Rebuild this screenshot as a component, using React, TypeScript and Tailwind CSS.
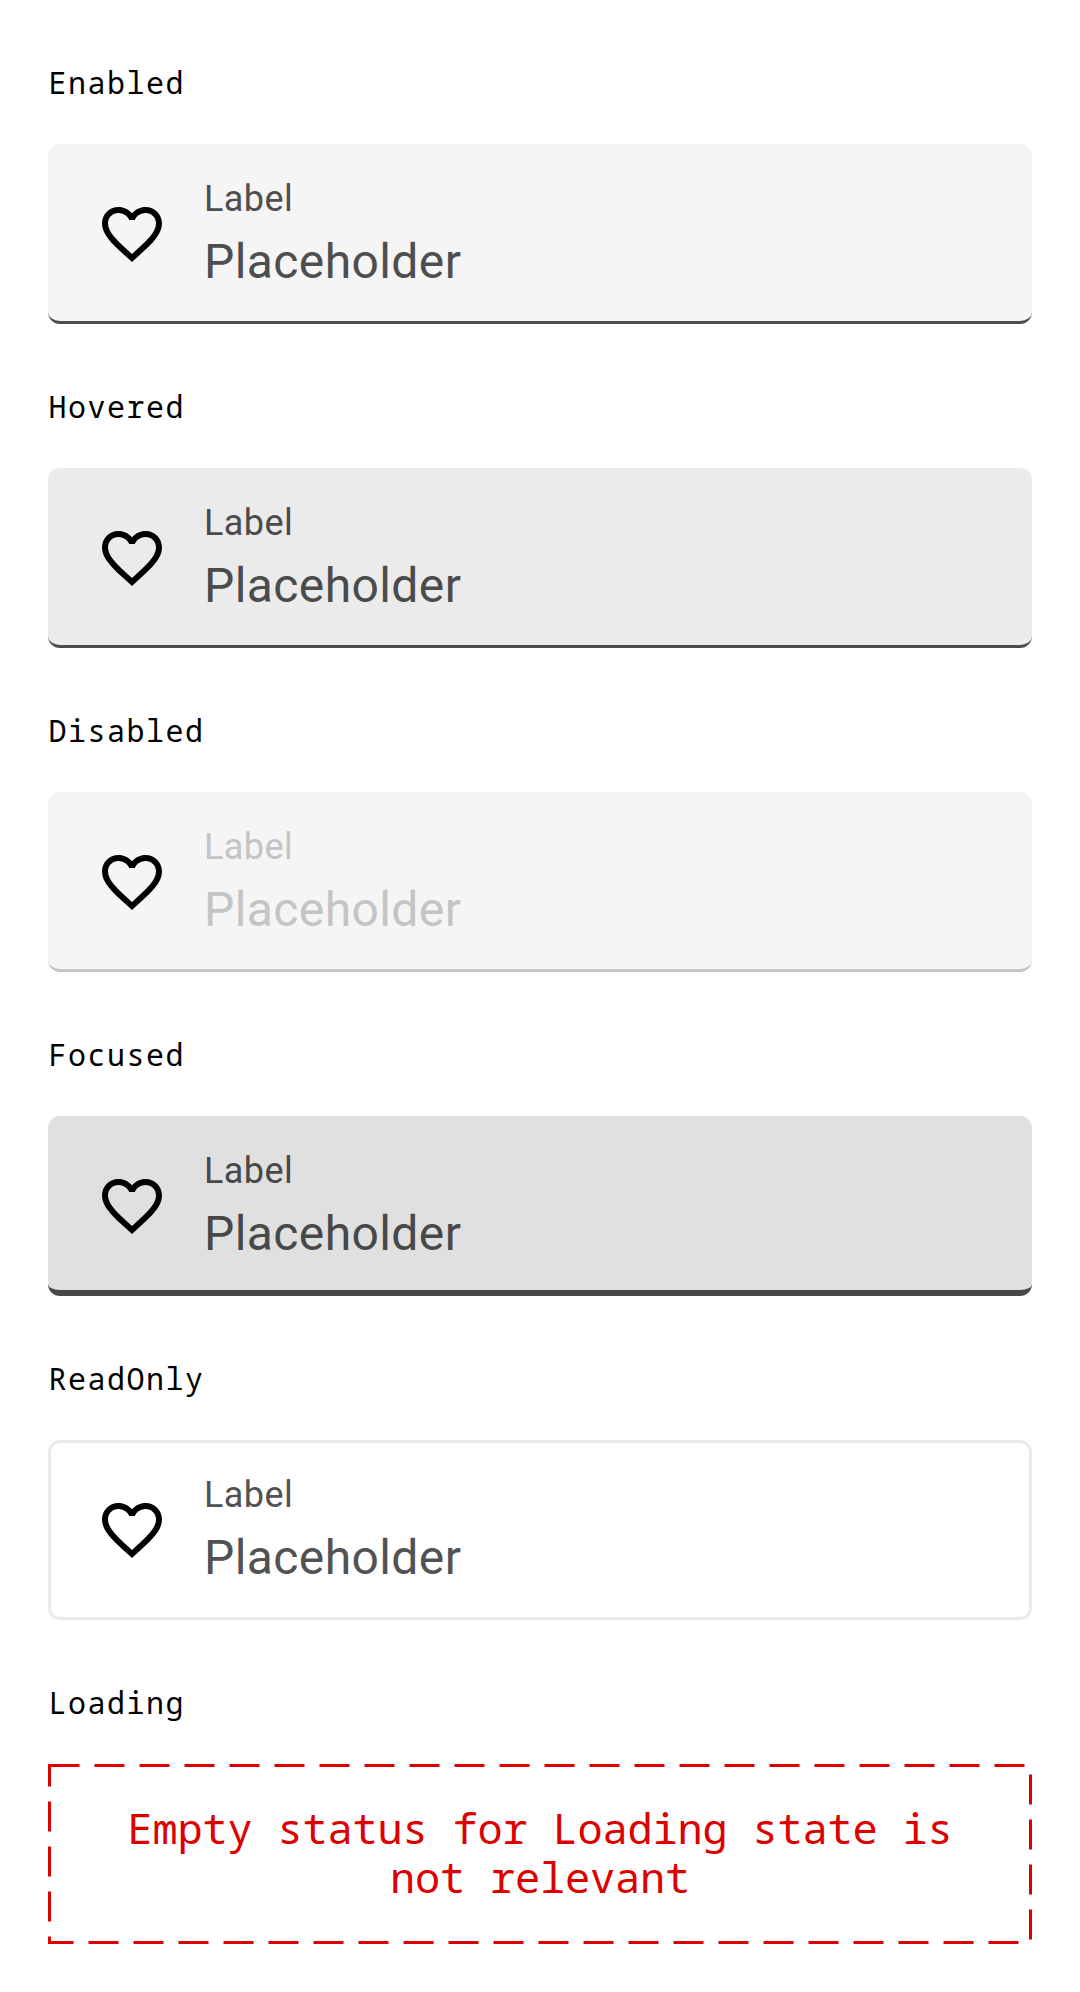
type FieldState = { name: string; box: string; text: string };

const states: FieldState[] = [
  { name: "Enabled", box: "bg-[#f5f5f5] border-b-3 border-[#4e4e4e]", text: "text-[#4e4e4e]" },
  { name: "Hovered", box: "bg-[#ebebeb] border-b-3 border-[#4b4b4b]", text: "text-[#4b4b4b]" },
  { name: "Disabled", box: "bg-[#f5f5f5] border-b-3 border-[#c4c4c4]", text: "text-[#c4c4c4]" },
  { name: "Focused", box: "bg-[#e0e0e0] border-b-6 border-[#484848]", text: "text-[#484848]" },
  { name: "ReadOnly", box: "bg-white shadow-[inset_0_0_0_3px_#ebebeb]", text: "text-[#525252]" },
];

function HeartIcon() {
  return (
    <svg viewBox="0 0 24 24" className="size-[72px] shrink-0 mt-[54px]" fill="#000">
      <path d="M16.5 3c-1.74 0-3.41.81-4.5 2.09C10.91 3.81 9.24 3 7.5 3 4.42 3 2 5.42 2 8.5c0 3.78 3.4 6.86 8.55 11.54L12 21.35l1.45-1.32C18.6 15.36 22 12.28 22 8.5 22 5.42 19.58 3 16.5 3zm-4.4 15.55l-.1.1-.1-.1C7.14 14.24 4 11.39 4 8.5 4 6.5 5.5 5 7.5 5c1.54 0 3.04.99 3.57 2.36h1.87C13.46 5.99 14.96 5 16.5 5c2 0 3.5 1.5 3.5 3.5 0 2.89-3.14 5.74-7.9 10.05z" />
    </svg>
  );
}

function Heading({ children }: { children: string }) {
  return (
    <h2 className="h-9 mb-[43px] pl-[0.5px] font-['Noto_Sans_Mono',monospace] text-[30px] font-[370] leading-9 tracking-[1.5px] text-black">
      {children}
    </h2>
  );
}

function TextField({ box, text }: { box: string; text: string }) {
  return (
    <div className={`flex h-[180px] items-start rounded-xl pl-12 ${box}`}>
      <HeartIcon />
      <div className={`ml-9 pt-[31px] font-['Roboto',sans-serif] ${text}`}>
        <div className="text-[36px] leading-12 tracking-[0.45px]">Label</div>
        <div className="mt-[3px] text-[48px] leading-[72px] tracking-[0.4px]">Placeholder</div>
      </div>
    </div>
  );
}

function EmptyStatus() {
  return (
    <div className="relative h-[180px] pt-[39px] text-center font-['Noto_Sans_Mono',monospace] text-[42px] leading-[49px] tracking-[-0.2px] text-[#dd0000]">
      <svg className="absolute inset-0" width="984" height="180" fill="none">
        <rect x="1.5" y="1.5" width="981" height="177" stroke="#dd0000" strokeWidth="3" strokeDasharray="30 15" />
      </svg>
      Empty status for Loading state is
      <br />
      not relevant
    </div>
  );
}

export default function App() {
  return (
    <main className="flex h-[1992px] w-[1080px] flex-col gap-[65px] bg-white px-12 pt-[65px]">
      {states.map((s) => (
        <section key={s.name}>
          <Heading>{s.name}</Heading>
          <TextField box={s.box} text={s.text} />
        </section>
      ))}
      <section>
        <Heading>Loading</Heading>
        <EmptyStatus />
      </section>
    </main>
  );
}
